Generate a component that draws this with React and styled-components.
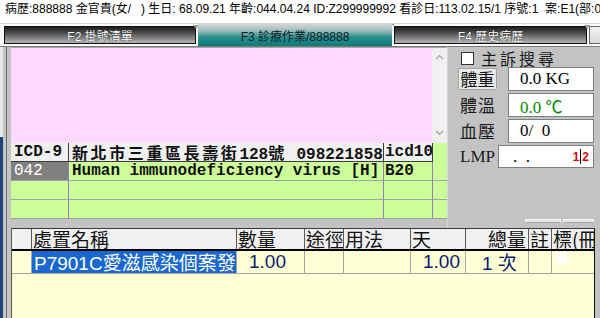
import React from 'react';
import styled, { createGlobalStyle, css } from 'styled-components';

const UI = `"Liberation Sans", "Noto Sans CJK TC", sans-serif`;
const CJK = `"Noto Sans CJK TC", "Liberation Sans", sans-serif`;
const MONO = `"Liberation Mono", "Noto Sans CJK TC", monospace`;
const SERIF = `"Liberation Serif", "Noto Sans CJK TC", serif`;

const GlobalStyle = createGlobalStyle`
  html, body { margin: 0; padding: 0; background: #fff; }
  body { font-family: ${UI}; }
  #root { width: 600px; height: 318px; overflow: hidden; }
  * { box-sizing: border-box; }
`;

const Screen = styled.div`
  width: 600px;
  height: 318px;
  display: flex;
  flex-direction: column;
  background: #fff;
  overflow: hidden;
`;

const InfoBar = styled.div`
  height: 23px;
  line-height: 19px;
  padding-left: 5px;
  font-size: 12px;
  color: #000;
  white-space: pre;
  overflow: hidden;
`;

const TabStrip = styled.div`
  height: 23px;
  border-top: 1px solid #d4d4d4;
  display: flex;
  align-items: flex-start;
  padding-left: 4px;
  gap: 2px;
  background: #fafafa;
  overflow: hidden;
`;

const tabLooks = {
  dark: css`
    margin-top: 2px;
    height: 18px;
    border: 1px solid #111;
    background: linear-gradient(to bottom, #1c1c1c 0%, #4a4a4a 35%, #8c8c8c 75%, #b4b4b4 100%);
    color: #fff;
    text-shadow: 0 0 1px #000;
  `,
  active: css`
    height: 22px;
    background: linear-gradient(to bottom, #d6d6d6 0%, #9fbcbc 30%, #2a8f8c 60%, #0b7b77 100%);
    color: #061a2a;
  `,
  stub: css`
    margin-top: 2px;
    height: 18px;
    border: 1px solid #666;
    background: linear-gradient(to bottom, #f4f4f4, #d8d8d8);
  `,
};

const Tab = styled.div`
  position: relative;
  flex: 0 0 ${p => p.$w}px;
  display: flex;
  align-items: center;
  justify-content: center;
  font-size: 12px;
  white-space: nowrap;
  ${p => tabLooks[p.$look]}
  ${p => p.$mark && css`
    &::after {
      content: '';
      position: absolute;
      top: -2px;
      right: -4px;
      border: 3px solid transparent;
      border-top: 4px solid #9a9a9a;
    }
  `}
`;

const Workspace = styled.div`
  flex: 1;
  display: flex;
  flex-direction: column;
  border-top: 1px solid #7c7c7c;
  padding: 0 5px 0 11px;
  background:
    linear-gradient(to right, transparent 6px, #6c6c6c 6px 7px, transparent 7px),
    linear-gradient(to bottom, #e6e6e6 0 90px, #22407c 90px) left / 3px 100% no-repeat,
    #c3c3c3;
`;

const TopSection = styled.div`
  height: 181px;
  display: flex;
`;

const LeftColumn = styled.div`
  width: 436px;
  display: flex;
  flex-direction: column;
`;

const Memo = styled.div`
  height: 96px;
  display: flex;
  border-top: 1px solid #a6a6a6;
`;

const MemoArea = styled.div`
  flex: 1;
  background: #ffdaff;
`;

const ScrollBar = styled.div`
  width: 15px;
  background: #f0f0f0;
  display: flex;
  flex-direction: column;
  justify-content: space-between;
  align-items: center;
  padding: 6px 0 7px;
`;

const Chevron = ({ up }) => (
  <svg width="9" height="6" viewBox="0 0 9 6">
    <path d={up ? 'M1 5 L4.5 1.5 L8 5' : 'M1 1 L4.5 4.5 L8 1'} fill="none" stroke="#a3a3a3" strokeWidth="1.2" />
  </svg>
);

const IcdGrid = styled.div`
  height: 76px;
  display: grid;
  grid-template-columns: 58px 315px 49px 14px;
  grid-auto-rows: 19px;
  background: #ccff99;
  font-family: ${MONO};
  font-weight: bold;
  font-size: 16px;
`;

const IcdCell = styled.div`
  line-height: 18px;
  padding-left: ${p => (p.$tight ? 1 : 3)}px;
  white-space: nowrap;
  overflow: hidden;
  color: #111;
  border-right: 1px solid #8f80ad;
  border-bottom: 1px solid #a2a2a2;
  ${p => p.$head && css`
    background: #f0f0f0;
    border-right-color: #3c3c3c;
    border-bottom-color: #3c3c3c;
  `}
  ${p => p.$sel && css`
    background: #7f7f7f;
    color: #fff;
    font-weight: normal;
  `}
  ${p => p.$filler && css`
    background: transparent;
    border-right: none;
    border-bottom-color: ${p.$head ? 'transparent' : '#a2a2a2'};
  `}
`;

const Han = styled.span`
  font-family: ${CJK};
  font-size: 16px;
  letter-spacing: 2.6px;
`;

const SidePanel = styled.div`
  flex: 1;
  display: flex;
  flex-direction: column;
  padding: 2px 4px 5px 10px;
  border-left: 1px solid #d6d6d6;
`;

const CheckRow = styled.div`
  height: 18px;
  display: flex;
  align-items: center;
  gap: 7px;
  padding-left: 3px;
  font-family: ${CJK};
  font-size: 16px;
  letter-spacing: 3px;
  color: #1a1a1a;
`;

const CheckBox = styled.span`
  width: 13px;
  height: 13px;
  background: #fff;
  border: 1px solid #333;
`;

const Field = styled.div`
  height: ${p => p.$h || 24}px;
  margin-top: ${p => p.$mt ?? 2}px;
  display: flex;
  align-items: center;
`;

const FieldLabel = styled.div`
  width: 40px;
  padding-left: 2px;
  font-family: ${p => (p.$latin ? SERIF : CJK)};
  font-size: 17px;
  letter-spacing: ${p => (p.$latin ? 0 : 1)}px;
  line-height: 20px;
  color: #1c1c1c;
`;

const LabelButton = styled.div`
  width: 39px;
  height: 22px;
  display: flex;
  align-items: center;
  justify-content: center;
  font-family: ${CJK};
  font-size: 17px;
  line-height: 20px;
  background: #e9e9e9;
  border: 1px solid #a2a2a2;
  border-radius: 2px;
  color: #111;
`;

const ValueBox = styled.div`
  margin-left: auto;
  width: ${p => p.$w || 86}px;
  height: 100%;
  display: flex;
  align-items: center;
  padding: 0 4px 0 ${p => p.$pl || 11}px;
  background: #fff;
  border: 1px solid #7e7e7e;
  font-family: ${SERIF};
  font-size: 17px;
  white-space: pre;
  color: ${p => p.$color || '#000'};
`;

const RedDigits = styled.span`
  margin-left: auto;
  color: #e00000;
  font-family: ${UI};
  font-weight: bold;
  font-size: 12px;
  display: flex;
  align-items: center;
`;

const Caret = styled.span`
  width: 1px;
  height: 15px;
  margin: 0 1px;
  background: #000;
`;

const MiniButtons = styled.div`
  margin-top: auto;
  display: flex;
  justify-content: flex-end;
  gap: 2px;
`;

const MiniButton = styled.div`
  width: ${p => p.$w}px;
  height: 4px;
  background: #e4e4e4;
  border: 1px solid #f6f6f6;
  border-bottom-color: #a8a8a8;
`;

const OrderGrid = styled.div`
  flex: 1;
  background: #ffffd4;
  border-top: 1px solid #3a3a3a;
  border-left: 1px solid #5a5a5a;
  border-right: 1px solid #111;
`;

const orderCols = '20px 205px 68px 39px 67px 55px 63px 23px 1fr';

const OrderHead = styled.div`
  display: grid;
  grid-template-columns: ${orderCols};
  height: 22px;
  background: #f0f0f0;
  border-bottom: 2px solid #000;
`;

const OrderRow = styled.div`
  display: grid;
  grid-template-columns: ${orderCols};
  height: 23px;
  border-bottom: 1px solid #a4a4a4;
`;

const HeadCell = styled.div`
  border-right: 1px solid #5a5a5a;
  font-family: ${CJK};
  font-size: 19px;
  line-height: 20px;
  padding: 0 ${p => (p.$right ? 2 : 0)}px 0 1px;
  text-align: ${p => (p.$right ? 'right' : 'left')};
  white-space: nowrap;
  overflow: hidden;
  color: #111;
  &:last-child { border-right: none; }
`;

const DataCell = styled.div`
  border-right: 1px solid #a4a4a4;
  font-family: ${UI};
  font-size: 19px;
  line-height: 22px;
  white-space: pre;
  overflow: hidden;
  color: #0c1a78;
  text-align: ${p => p.$align || 'left'};
  padding: 0 ${p => p.$pr || 0}px 0 ${p => p.$pl || 0}px;
  ${p => p.$sel && css`
    background: #1868d0;
    color: #fff;
    padding-left: 2px;
  `}
  &:last-child { border-right: none; }
`;

const HanText = styled.span`
  font-family: ${CJK};
`;

const TickBox = styled.span`
  display: block;
  width: 11px;
  height: 11px;
  margin: 2px 0 0 4px;
  background: #fff;
`;

const icdRows = [
  { code: '042', name: 'Human immunodeficiency virus [H]', icd10: 'B20' },
  { code: '', name: '', icd10: '' },
  { code: '', name: '', icd10: '' },
];

export default function App() {
  return (
    <Screen>
      <GlobalStyle />
      <InfoBar>病歷:888888 金官貴(女/   ) 生日: 68.09.21 年齡:044.04.24 ID:Z299999992 看診日:113.02.15/1 序號:1  案:E1(部:00</InfoBar>
      <TabStrip>
        <Tab $look="dark" $w={192} $mark>F2 掛號清單</Tab>
        <Tab $look="active" $w={194} $mark>F3 診療作業/888888</Tab>
        <Tab $look="dark" $w={193} $mark>F4 歷史病歷</Tab>
        <Tab $look="stub" $w={20} />
      </TabStrip>
      <Workspace>
        <TopSection>
          <LeftColumn>
            <Memo>
              <MemoArea />
              <ScrollBar>
                <Chevron up />
                <Chevron />
              </ScrollBar>
            </Memo>
            <IcdGrid>
              <IcdCell $head>ICD-9</IcdCell>
              <IcdCell $head><Han>新北市三重區長壽街</Han>128<Han>號</Han> 0982218588</IcdCell>
              <IcdCell $head $tight>icd10</IcdCell>
              <IcdCell $head $filler />
              {icdRows.map((r, i) => (
                <React.Fragment key={i}>
                  <IcdCell $sel={!!r.code}>{r.code}</IcdCell>
                  <IcdCell>{r.name}</IcdCell>
                  <IcdCell $tight>{r.icd10}</IcdCell>
                  <IcdCell $filler />
                </React.Fragment>
              ))}
            </IcdGrid>
          </LeftColumn>
          <SidePanel>
            <CheckRow><CheckBox />主訴搜尋</CheckRow>
            <Field $mt={0}>
              <LabelButton>體重</LabelButton>
              <ValueBox>0.0 KG</ValueBox>
            </Field>
            <Field>
              <FieldLabel>體溫</FieldLabel>
              <ValueBox $color="#008a00">0.0 ℃</ValueBox>
            </Field>
            <Field>
              <FieldLabel>血壓</FieldLabel>
              <ValueBox>0/  0</ValueBox>
            </Field>
            <Field $h={23}>
              <FieldLabel $latin>LMP</FieldLabel>
              <ValueBox $w={96} $pl={14}>
                .  .
                <RedDigits>1<Caret />2</RedDigits>
              </ValueBox>
            </Field>
            <MiniButtons>
              <MiniButton $w={36} />
              <MiniButton $w={31} />
            </MiniButtons>
          </SidePanel>
        </TopSection>
        <OrderGrid>
          <OrderHead>
            <HeadCell />
            <HeadCell>處置名稱</HeadCell>
            <HeadCell>數量</HeadCell>
            <HeadCell>途徑</HeadCell>
            <HeadCell>用法</HeadCell>
            <HeadCell>天</HeadCell>
            <HeadCell $right>總量</HeadCell>
            <HeadCell>註</HeadCell>
            <HeadCell>標(冊</HeadCell>
          </OrderHead>
          <OrderRow>
            <DataCell />
            <DataCell $sel>P7901C<HanText>愛滋感染個案發</HanText></DataCell>
            <DataCell $align="right" $pr={18}>1.00</DataCell>
            <DataCell />
            <DataCell />
            <DataCell $align="right" $pr={5}>1.00</DataCell>
            <DataCell $pl={16}>1 <HanText>次</HanText></DataCell>
            <DataCell />
            <DataCell><TickBox /></DataCell>
          </OrderRow>
        </OrderGrid>
      </Workspace>
    </Screen>
  );
}
